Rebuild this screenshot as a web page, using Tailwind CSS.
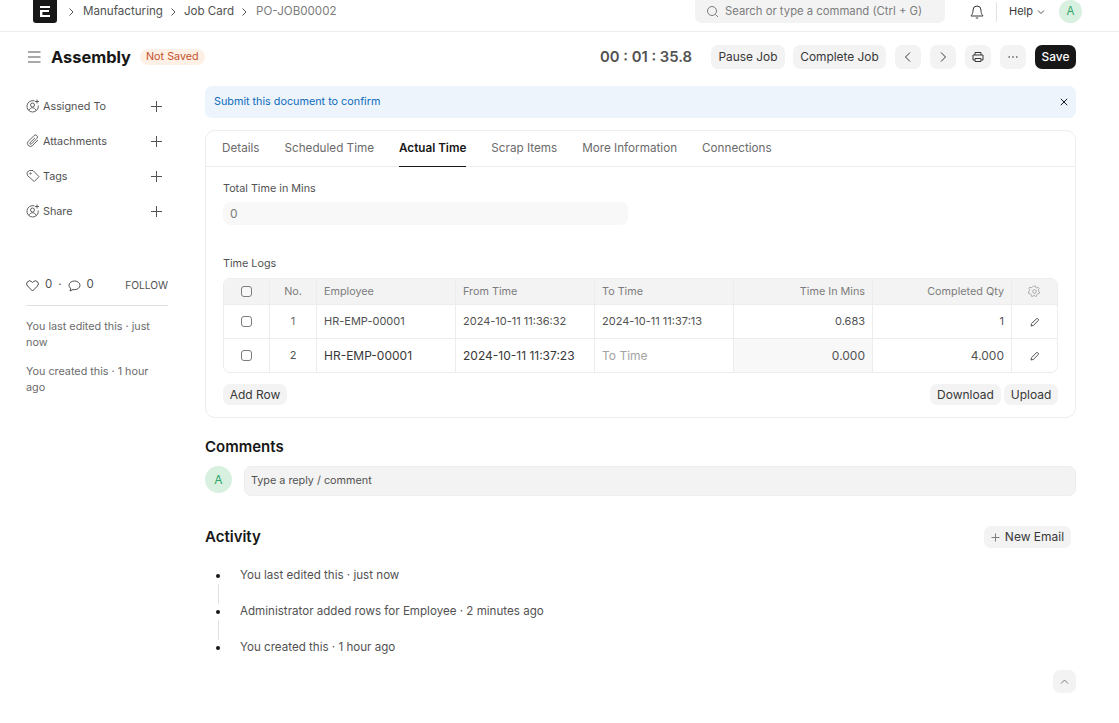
<!DOCTYPE html>
<html lang="en">
<head>
  <meta charset="UTF-8">
  <meta name="viewport" content="width=device-width, initial-scale=1.0">
  <title>Assembly</title>
  <script src="https://cdn.jsdelivr.net/npm/@tailwindcss/browser@4"></script>
</head>
<body class="bg-white font-['Inter',sans-serif] text-[#383838] h-[723px] overflow-hidden">
  <!-- Navbar -->
  <nav class="h-8 border-b border-[#ededed] pl-[33px] pr-[37px] flex items-start justify-between">
    <div class="flex items-center h-[23px] text-[11.6px]">
      <div class="w-6 h-[23px] bg-[#171717] rounded-b-[3px] flex items-center justify-center">
        <svg width="10" height="11" viewBox="0 0 10 11" fill="#fff"><path d="M0 0h10v2H0zM0 4h9v2H2.400v3H10v2H0z"/></svg>
      </div>
      <svg class="ml-[11px]" width="7" height="10" viewBox="0 0 7 10" fill="none" stroke="#525252"><path d="M1.500 1.500 5 5 1.500 8.500"/></svg>
      <span class="ml-[8px] text-[#525252]">Manufacturing</span>
      <svg class="ml-[7px]" width="7" height="10" viewBox="0 0 7 10" fill="none" stroke="#525252"><path d="M1.500 1.500 5 5 1.500 8.500"/></svg>
      <span class="ml-[7px] text-[#525252]">Job Card</span>
      <svg class="ml-[7px]" width="7" height="10" viewBox="0 0 7 10" fill="none" stroke="#525252"><path d="M1.500 1.500 5 5 1.500 8.500"/></svg>
      <span class="ml-[8px] text-[#7c7c7c]">PO-JOB00002</span>
    </div>
    <div class="flex items-center h-[23px]">
      <div class="w-[250px] h-[23px] bg-[#f3f3f3] rounded-b-[7px] flex items-center pl-[11px] text-[11.3px] text-[#7c7c7c]">
        <svg width="13" height="13" viewBox="0 0 13 13" fill="none" stroke="#7c7c7c"><circle cx="6" cy="6" r="4.500"/><path d="m9.500 9.500 2.500 2.500"/></svg>
        <span class="ml-[6px]">Search or type a command (Ctrl + G)</span>
      </div>
      <svg class="ml-[24px]" width="16" height="16" viewBox="0 0 16 16" fill="none" stroke="#383838"><path d="M8 2a4 4 0 0 0-4 4c0 4-1.500 5-2 6h12c-.5-1-2-2-2-6a4 4 0 0 0-4-4zM6.800 14h2.400" stroke-linejoin="round"/></svg>
      <div class="ml-[11px] w-px h-5 bg-[#e2e2e2]"></div>
      <span class="ml-[12px] text-[11px] text-[#383838]">Help</span>
      <svg class="ml-[4px]" width="8" height="6" viewBox="0 0 8 6" fill="none" stroke="#525252"><path d="m1 1.500 3 3 3-3"/></svg>
      <div class="ml-[14px] w-[23px] h-[23px] rounded-full bg-[#d8f0df] flex items-center justify-center text-[11.500px] text-[#30a66d]">A</div>
    </div>
  </nav>

  <!-- Page head -->
  <header class="h-[50px] pl-[28px] pr-[43px] flex items-center justify-between">
    <div class="flex items-center">
      <svg width="13" height="12" viewBox="0 0 13 12" fill="none" stroke="#525252"><path d="M0 1h12.500M0 6h12.500M0 11h12.500"/></svg>
      <h1 class="ml-[10px] text-[16.4px] font-bold text-[#171717] leading-none">Assembly</h1>
      <span class="ml-[9px] h-[16px] px-[6px] rounded-full bg-[#fff0e6] text-[#c4532d] text-[10.8px] flex items-center">Not Saved</span>
    </div>
    <div class="flex items-center">
      <span class="text-[14.8px] font-semibold text-[#525252] mr-[19px]">00 : 01 : 35.8</span>
      <button class="h-6 w-[74px] rounded-[7px] bg-[#f3f3f3] text-[11.9px] text-[#383838]">Pause Job</button>
      <button class="ml-2 h-6 w-[93px] rounded-[7px] bg-[#f3f3f3] text-[11.9px] text-[#383838]">Complete Job</button>
      <button class="ml-[9px] w-[26px] h-6 rounded-[7px] bg-[#f3f3f3] flex items-center justify-center">
        <svg width="8" height="12" viewBox="0 0 8 12" fill="none" stroke="#383838"><path d="M6 1.500 1.500 6 6 10.500"/></svg>
      </button>
      <button class="ml-[9px] w-[26px] h-6 rounded-[7px] bg-[#f3f3f3] flex items-center justify-center">
        <svg width="8" height="12" viewBox="0 0 8 12" fill="none" stroke="#383838"><path d="M2 1.500 6.500 6 2 10.500"/></svg>
      </button>
      <button class="ml-[9px] w-[26px] h-6 rounded-[7px] bg-[#f3f3f3] flex items-center justify-center">
        <svg width="12" height="12" viewBox="0 0 12 12" fill="none" stroke="#383838"><path d="M3 4V1.500h6V4M3 9H1V4h10v5H9M3 7.500h6v3H3z"/></svg>
      </button>
      <button class="ml-[9px] w-[26px] h-6 rounded-[7px] bg-[#f3f3f3] flex items-center justify-center">
        <svg width="10" height="2" viewBox="0 0 10 2" fill="#383838"><circle cx="1.200" cy="1" r=".8"/><circle cx="5" cy="1" r=".8"/><circle cx="8.800" cy="1" r=".8"/></svg>
      </button>
      <button class="ml-[9px] h-6 w-[41px] rounded-[7px] bg-[#171717] text-white text-[11.9px] font-medium">Save</button>
    </div>
  </header>

  <div class="mt-[4px] flex pl-[26px] pr-[43px]">
    <!-- Sidebar -->
    <aside class="w-[142px] shrink-0 text-[10.8px] text-[#525252]">
      <div class="flex flex-col gap-[15px] mt-[10px]">
        <div class="h-5 flex items-center">
          <svg width="14" height="14" viewBox="0 0 14 14" fill="none" stroke="#525252" stroke-width=".9"><path d="M8.500 1.900A5.700 5.700 0 1 0 12.300 6.500"/><circle cx="6.500" cy="6" r="2"/><path d="M3 11.500c.7-2 2-2.700 3.500-2.700s2.800.7 3.500 2.700M11 .5v4M9 2.500h4"/></svg>
          <span class="ml-[3px] pt-[2px]">Assigned To</span>
          <svg class="ml-auto mr-[6px]" width="11" height="11" viewBox="0 0 11 11" stroke="#525252"><path d="M5.500 0v11M0 5.500h11"/></svg>
        </div>
        <div class="h-5 flex items-center">
          <svg width="14" height="14" viewBox="0 0 14 14" fill="none" stroke="#525252" stroke-width=".9"><path d="M12 6 6.600 11.500a3 3 0 0 1-4.300-4.200L8 1.600a2 2 0 0 1 2.900 2.800L5.400 10a.9.9 0 0 1-1.300-1.300L9 3.800"/></svg>
          <span class="ml-[3px] pt-[2px]">Attachments</span>
          <svg class="ml-auto mr-[6px]" width="11" height="11" viewBox="0 0 11 11" stroke="#525252"><path d="M5.500 0v11M0 5.500h11"/></svg>
        </div>
        <div class="h-5 flex items-center">
          <svg width="14" height="14" viewBox="0 0 14 14" fill="none" stroke="#525252" stroke-width=".9"><path d="M1 3.500 3.500 1.500H7l6 6.200-4.800 4.800L1.500 6.500z" stroke-linejoin="round"/><circle cx="4.500" cy="4.500" r=".7"/></svg>
          <span class="ml-[3px] pt-[2px]">Tags</span>
          <svg class="ml-auto mr-[6px]" width="11" height="11" viewBox="0 0 11 11" stroke="#525252"><path d="M5.500 0v11M0 5.500h11"/></svg>
        </div>
        <div class="h-5 flex items-center">
          <svg width="14" height="14" viewBox="0 0 14 14" fill="none" stroke="#525252" stroke-width=".9"><path d="M8.500 1.900A5.700 5.700 0 1 0 12.300 6.500"/><circle cx="6.500" cy="6" r="2"/><path d="M3 11.500c.7-2 2-2.700 3.500-2.700s2.800.7 3.500 2.700M11 .5v4M9 2.500h4"/></svg>
          <span class="ml-[3px] pt-[2px]">Share</span>
          <svg class="ml-auto mr-[6px]" width="11" height="11" viewBox="0 0 11 11" stroke="#525252"><path d="M5.500 0v11M0 5.500h11"/></svg>
        </div>
      </div>
      <div class="mt-[55px] h-[21px] flex items-center pb-px text-[11.5px]">
        <svg width="13" height="12" viewBox="0 0 13 12" fill="none" stroke="#383838" stroke-width=".9"><path d="M6.500 11 1.500 6a3 3 0 0 1 0-4.200 3 3 0 0 1 4.300 0l.7.700.7-.7a3 3 0 0 1 4.300 0 3 3 0 0 1 0 4.200z" stroke-linejoin="round"/></svg>
        <span class="ml-[6px] -mt-[2px]">0</span>
        <span class="ml-[6px] -mt-[2px]">·</span>
        <svg class="ml-[6px]" width="13" height="12" viewBox="0 0 13 12" fill="none" stroke="#383838" stroke-width=".9"><path d="M6.500 1C3.500 1 1 2.900 1 5.300c0 1.300.7 2.400 1.800 3.200L2 11l3-1.500c.5.100 1 .2 1.500.2 3 0 5.500-2 5.500-4.400S9.500 1 6.500 1z" stroke-linejoin="round"/></svg>
        <span class="ml-[6px] -mt-[2px]">0</span>
        <span class="ml-auto text-[10.2px] text-[#525252]">FOLLOW</span>
      </div>
      <div class="mt-[8px] border-t border-[#e2e2e2] pt-[13px] text-[10.8px] leading-4 text-[#6b6b6b]">
        <p>You last edited this · just now</p>
        <p class="mt-[13px]">You created this · 1 hour ago</p>
      </div>
    </aside>

    <!-- Main -->
    <main class="ml-[37px] flex-1 min-w-0">
      <div class="h-8 rounded-[7px] bg-[#edf4fc] pl-[9px] pr-2 flex items-center justify-between text-[10.8px] text-[#0f6cbd]">
        <span>Submit this document to confirm</span>
        <svg width="8" height="8" viewBox="0 0 8 8" stroke="#171717"><path d="m.8.800 6.400 6.400M7.200.800.800 7.200"/></svg>
      </div>

      <section class="mt-[12px] h-[288px] rounded-[10px] border border-[#ededed]">
        <div class="h-[36px] border-b border-[#ededed] pl-[16px] flex gap-[25px] text-[11.7px] text-[#6b6b6b]">
          <span class="leading-[34px]">Details</span>
          <span class="leading-[34px]">Scheduled Time</span>
          <span class="leading-[34px] h-[36px] border-b border-[#171717] font-semibold text-[#171717]">Actual Time</span>
          <span class="leading-[34px]">Scrap Items</span>
          <span class="leading-[34px]">More Information</span>
          <span class="leading-[34px]">Connections</span>
        </div>
        <div class="px-[17px]">
          <div class="mt-[15px] text-[10.8px] text-[#525252] leading-[14px]">Total Time in Mins</div>
          <div class="mt-[6px] w-[405px] h-[23px] rounded-[7px] bg-[#f8f8f8] pl-[7px] flex items-center text-[12px] text-[#7c7c7c]">0</div>
          <div class="mt-[32px] text-[10.8px] text-[#525252] leading-[14px]">Time Logs</div>

          <div class="mt-[7px] rounded-[7px] border border-[#ededed] overflow-hidden">
            <div class="grid grid-cols-[45px_47px_139px_139px_139px_139px_139px_1fr] h-[25px] bg-[#f3f3f3] text-[10.8px] text-[#7c7c7c] items-stretch">
              <div class="flex items-center justify-center"><span class="w-[11px] h-[11px] rounded-[3px] border border-[#7c7c7c] bg-white/40"></span></div>
              <div class="border-l border-[#ededed] flex items-center justify-center pt-px">No.</div>
              <div class="border-l border-[#ededed] flex items-center pl-[7px] pt-px">Employee</div>
              <div class="border-l border-[#ededed] flex items-center pl-[7px] pt-px">From Time</div>
              <div class="border-l border-[#ededed] flex items-center pl-[7px] pt-px">To Time</div>
              <div class="border-l border-[#ededed] flex items-center justify-end pr-[7px] pt-px">Time In Mins</div>
              <div class="border-l border-[#ededed] flex items-center justify-end pr-[7px] pt-px">Completed Qty</div>
              <div class="border-l border-[#ededed] flex items-center justify-center">
                <svg width="13" height="13" viewBox="0 0 13 13" fill="none" stroke="#a3a3a3" stroke-width=".9"><circle cx="6.500" cy="6.500" r="1.800"/><path d="M5.500 1h2l.3 1.500 1.300.6 1.300-.8 1.100 1.500-1 1.100.2 1.600 1.300.7-.6 1.800-1.500-.1-1 1.100.1 1.500-1.800.5-.8-1.300H5.600l-.8 1.300L3 11.600l.1-1.500-1-1.100-1.500.1L0 7l1.300-.7.200-1.600-1-1.100 1.100-1.500 1.300.8 1.300-.6z" transform="translate(.3 .1) scale(.95)" stroke-linejoin="round"/></svg>
              </div>
            </div>
            <div class="grid grid-cols-[45px_47px_139px_139px_139px_139px_139px_1fr] h-[34px] border-t border-[#ededed] text-[11px] text-[#525252]">
              <div class="flex items-center justify-center"><span class="w-[11px] h-[11px] rounded-[3px] border border-[#7c7c7c]"></span></div>
              <div class="border-l border-[#ededed] flex items-center justify-center text-[#6b6b6b]">1</div>
              <div class="border-l border-[#ededed] flex items-center pl-[7px]">HR-EMP-00001</div>
              <div class="border-l border-[#ededed] flex items-center pl-[7px]">2024-10-11 11:36:32</div>
              <div class="border-l border-[#ededed] flex items-center pl-[7px]">2024-10-11 11:37:13</div>
              <div class="border-l border-[#ededed] flex items-center justify-end pr-[7px]">0.683</div>
              <div class="border-l border-[#ededed] flex items-center justify-end pr-[7px]">1</div>
              <div class="border-l border-[#ededed] flex items-center justify-center">
                <svg width="10" height="10" viewBox="0 0 10 10" fill="none" stroke="#525252"><path d="M1 9l.6-2.400L7 1.200l1.800 1.800L3.400 8.400z" stroke-linejoin="round"/></svg>
              </div>
            </div>
            <div class="grid grid-cols-[45px_47px_139px_139px_139px_139px_139px_1fr] h-[34px] border-t border-[#ededed] text-[12px] text-[#383838]">
              <div class="flex items-center justify-center"><span class="w-[11px] h-[11px] rounded-[3px] border border-[#7c7c7c]"></span></div>
              <div class="border-l border-[#ededed] flex items-center justify-center text-[11px] text-[#525252]">2</div>
              <div class="border-l border-[#ededed] flex items-center pl-[7px]">HR-EMP-00001</div>
              <div class="border-l border-[#ededed] flex items-center pl-[7px]">2024-10-11 11:37:23</div>
              <div class="border-l border-[#ededed] flex items-center pl-[7px] text-[#a3a3a3]">To Time</div>
              <div class="border-l border-[#ededed] flex items-center justify-end pr-[7px] bg-[#f8f8f8] text-[#525252]">0.000</div>
              <div class="border-l border-[#ededed] flex items-center justify-end pr-[7px] text-[#525252]">4.000</div>
              <div class="border-l border-[#ededed] flex items-center justify-center">
                <svg width="10" height="10" viewBox="0 0 10 10" fill="none" stroke="#525252"><path d="M1 9l.6-2.400L7 1.200l1.800 1.800L3.400 8.400z" stroke-linejoin="round"/></svg>
              </div>
            </div>
          </div>

          <div class="mt-[11px] flex items-center text-[12px] text-[#383838]">
            <button class="h-[21px] w-[64px] rounded-[7px] bg-[#f3f3f3]">Add Row</button>
            <button class="ml-auto h-[21px] w-[71px] rounded-[7px] bg-[#f3f3f3]">Download</button>
            <button class="ml-[3px] h-[21px] w-[54px] rounded-[7px] bg-[#f3f3f3]">Upload</button>
          </div>
        </div>
      </section>

      <h2 class="mt-[20px] text-[15px] leading-[18px] font-semibold text-[#171717]">Comments</h2>
      <div class="mt-[10px] flex items-start">
        <div class="w-[27px] h-[27px] rounded-full bg-[#d8f0df] flex items-center justify-center text-[12px] text-[#30a66d]">A</div>
        <div class="ml-[12px] flex-1 h-[30px] rounded-[7px] border border-[#ededed] bg-[#f3f3f3] pl-[6px] flex items-center text-[10.8px] text-[#525252]">Type a reply / comment</div>
      </div>

      <div class="mt-[30px] pr-[5px] flex items-center justify-between">
        <h2 class="text-[15px] leading-[18px] font-semibold text-[#171717]">Activity</h2>
        <button class="h-[22px] w-[87px] rounded-[7px] bg-[#f3f3f3] flex items-center justify-center text-[12px] text-[#383838]">
          <svg width="9" height="9" viewBox="0 0 9 9" stroke="#7c7c7c"><path d="M4.500.500v8M.500 4.500h8"/></svg>
          <span class="ml-[5px]">New Email</span>
        </button>
      </div>

      <ul class="mt-[20px] text-[11.6px] text-[#525252]">
        <li class="flex items-center h-[16px]">
          <span class="w-[4px] h-[4px] ml-[11px] rounded-full bg-[#171717]"></span>
          <span class="ml-[20px]">You last edited this · just now</span>
        </li>
        <li class="ml-[13px] w-px h-[20px] bg-[#e2e2e2]"></li>
        <li class="flex items-center h-[16px]">
          <span class="w-[4px] h-[4px] ml-[11px] rounded-full bg-[#171717]"></span>
          <span class="ml-[20px]">Administrator added rows for Employee · 2 minutes ago</span>
        </li>
        <li class="ml-[13px] w-px h-[20px] bg-[#e2e2e2]"></li>
        <li class="flex items-center h-[16px]">
          <span class="w-[4px] h-[4px] ml-[11px] rounded-full bg-[#171717]"></span>
          <span class="ml-[20px]">You created this · 1 hour ago</span>
        </li>
      </ul>

      <div class="mt-[14px] flex justify-end">
        <button class="w-[23px] h-[23px] rounded-[7px] bg-[#f3f3f3] flex items-center justify-center">
          <svg width="9" height="6" viewBox="0 0 9 6" fill="none" stroke="#7c7c7c"><path d="m1 4.500 3.500-3.500L8 4.500"/></svg>
        </button>
      </div>
    </main>
  </div>
</body>
</html>
